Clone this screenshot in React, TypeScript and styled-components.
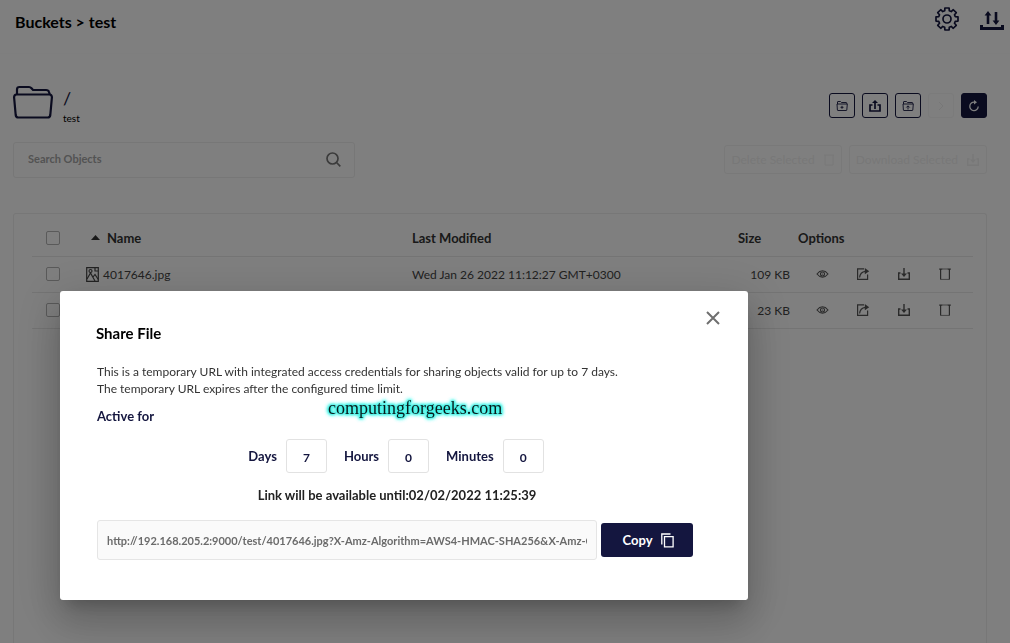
import React, { useState } from "react";
import styled, { createGlobalStyle, css } from "styled-components";

const navy = "#14163f";

const GlobalStyle = createGlobalStyle`
  *, *::before, *::after { box-sizing: border-box; }
  html, body { margin: 0; min-height: 100%; background: #ffffff; }
  body, button, input { font-family: Lato, "Liberation Sans", sans-serif; }
  body { overflow: hidden; }
`;

const Page = styled.div`
  display: flex;
  flex-direction: column;
  min-height: 100vh;
  color: #000000;
`;

const TopBar = styled.header`
  display: flex;
  align-items: flex-start;
  justify-content: space-between;
  height: 54px;
  padding: 7px 6px 0 15px;
  border-bottom: 1px solid #fcfcfc;
`;

const Crumbs = styled.h1`
  margin: 4px 0 0;
  font-size: 16px;
  line-height: 22px;
  font-weight: 700;
`;

const TopActions = styled.div`
  display: flex;
  gap: 21px;
  color: ${navy};
`;

const IconButton = styled.button<{ $pad?: number }>`
  display: flex;
  padding: ${(p) => p.$pad ?? 0}px;
  border: 0;
  background: none;
  color: inherit;
`;

const Main = styled.main`
  display: flex;
  flex-direction: column;
  flex: 1;
  padding: 31px 23px 0 13px;
`;

const TitleRow = styled.div`
  display: flex;
  justify-content: space-between;
  align-items: flex-start;
  height: 57px;
`;

const BucketTitle = styled.div`
  display: flex;
  gap: 10px;
  color: ${navy};
`;

const BucketText = styled.div`
  display: flex;
  flex-direction: column;
  padding-top: 3px;
`;

const Slash = styled.span`
  font-size: 18px;
  line-height: 20px;
`;

const BucketName = styled.span`
  font-size: 10px;
  line-height: 20px;
  color: #000000;
`;

const Actions = styled.div`
  display: flex;
  gap: 7px;
  padding-top: 8px;
`;

const SquareButton = styled.button<{ $tone?: "filled" | "faint" }>`
  display: flex;
  align-items: center;
  justify-content: center;
  width: 26px;
  height: 25px;
  padding: 0;
  border: 1px solid ${navy};
  border-radius: 3px;
  background: transparent;
  color: ${navy};
  ${(p) => p.$tone === "filled" && css`background: ${navy}; color: #ffffff;`}
  ${(p) => p.$tone === "faint" && css`border-color: #f6f6f6; color: #eeeeee;`}
`;

const FilterRow = styled.div`
  display: flex;
  justify-content: space-between;
  align-items: flex-start;
`;

const SearchBox = styled.label`
  display: flex;
  align-items: center;
  width: 342px;
  height: 36px;
  padding: 0 13px 2px 14px;
  border: 1px solid #eeeeee;
  border-radius: 3px;
  color: #777777;
`;

const SearchInput = styled.input`
  flex: 1;
  min-width: 0;
  padding: 0;
  border: 0;
  outline: 0;
  background: transparent;
  font-size: 11px;
  line-height: 16px;
  font-weight: 700;
  &::placeholder { color: #a6a6a6; opacity: 1; }
`;

const BulkActions = styled.div`
  display: flex;
  gap: 7px;
  padding-top: 3px;
`;

const GhostButton = styled.button`
  display: flex;
  align-items: center;
  gap: 8px;
  height: 29px;
  padding: 0 6px;
  border: 1px solid #f2f2f2;
  border-radius: 3px;
  background: transparent;
  color: #f0f0f0;
  font-size: 12px;
`;

const TablePanel = styled.section`
  flex: 1;
  margin-top: 35px;
  padding: 6px 13px 0 18px;
  border: 1px solid #eeeeee;
  border-bottom: 0;
  border-radius: 3px 3px 0 0;
`;

const Table = styled.table`
  width: 100%;
  table-layout: fixed;
  border-collapse: collapse;
`;

const Col = styled.col<{ $w?: number }>`
  ${(p) => p.$w && css`width: ${p.$w}px;`}
`;

const HeadCell = styled.th`
  height: 36px;
  padding: 0;
  border-bottom: 1px solid #e9e9e9;
  text-align: left;
  font-size: 13px;
  font-weight: 700;
  color: #333333;
`;

const Cell = styled.td<{ $right?: boolean }>`
  height: 36px;
  padding: 0;
  border-bottom: 1px solid #e9e9e9;
  font-size: 12px;
  color: #444444;
  ${(p) => p.$right && css`text-align: right; padding-right: 8px;`}
`;

const Inline = styled.div<{ $gap: number; $indent?: number }>`
  display: flex;
  align-items: center;
  gap: ${(p) => p.$gap}px;
  padding-left: ${(p) => p.$indent ?? 0}px;
`;

const Check = styled.input`
  display: block;
  appearance: none;
  width: 14px;
  height: 14px;
  margin: 0 0 0 14px;
  border: 1px solid #b4b4b4;
  border-radius: 2px;
`;

const RowActions = styled.div`
  display: flex;
  gap: 27px;
  padding-left: 18px;
  color: #555555;
`;

const Overlay = styled.div`
  position: fixed;
  inset: 0;
  padding: 291px 262px 0 60px;
  background: rgba(0, 0, 0, 0.5);
`;

const Dialog = styled.div`
  padding: 15px 23px 40px 36px;
  border-radius: 3px;
  background: #ffffff;
  color: #000000;
  box-shadow: 0 11px 15px -7px rgba(0, 0, 0, 0.2), 0 24px 38px 3px rgba(0, 0, 0, 0.14),
    0 9px 46px 8px rgba(0, 0, 0, 0.12);
`;

const DialogHead = styled.div`
  display: flex;
  justify-content: space-between;
  align-items: flex-start;
  height: 57px;
  color: #6f6f6f;
`;

const DialogTitle = styled.h2`
  margin: 17px 0 0;
  color: #000000;
  font-size: 15px;
  line-height: 20px;
  font-weight: 700;
`;

const DialogBody = styled.div`
  padding: 0 32px 0 1px;
`;

const Description = styled.p`
  margin: 0;
  font-size: 12px;
  line-height: 17px;
  color: #333333;
`;

const ActiveRow = styled.div`
  display: flex;
  gap: 174px;
  height: 42px;
`;

const ActiveFor = styled.div`
  padding-top: 10px;
  font-size: 13px;
  line-height: 18px;
  font-weight: 700;
  color: ${navy};
`;

const Watermark = styled.div`
  font-family: "Liberation Serif", serif;
  font-size: 18px;
  line-height: 22px;
  color: #0a1a1a;
  text-shadow: 0 0 2px #3ff2e6, 0 0 2px #3ff2e6, 0 0 3px #3ff2e6, 0 0 3px #3ff2e6, 0 0 4px #3ff2e6,
    0 0 4px #3ff2e6, 0 0 4px #3ff2e6, 0 0 4px #3ff2e6;
`;

const Durations = styled.div`
  display: flex;
  justify-content: center;
  gap: 17px;
  padding-left: 2px;
`;

const DurationLabel = styled.label`
  display: flex;
  align-items: center;
  gap: 9px;
  font-size: 13px;
  font-weight: 700;
  color: ${navy};
`;

const DurationInput = styled.input`
  width: 41px;
  height: 34px;
  padding: 2px 0 0;
  border: 1px solid #e2e2e2;
  border-radius: 3px;
  text-align: center;
  font-size: 12px;
  font-weight: 700;
  color: ${navy};
`;

const Until = styled.p`
  margin: 13px 0 16px;
  padding-left: 4px;
  text-align: center;
  font-size: 13px;
  line-height: 18px;
  font-weight: 700;
  color: #222222;
`;

const LinkRow = styled.div`
  display: flex;
  align-items: center;
  gap: 4px;
`;

const LinkInput = styled.input`
  flex: 1;
  min-width: 0;
  height: 40px;
  padding: 0 9px;
  border: 1px solid #e5e5e5;
  border-radius: 3px;
  background: #fafafa;
  font-size: 11px;
  font-weight: 700;
  color: #6b6b6b;
`;

const CopyButton = styled.button`
  display: flex;
  align-items: center;
  justify-content: center;
  gap: 8px;
  width: 92px;
  height: 34px;
  padding: 0 0 0 2px;
  border: 0;
  border-radius: 3px;
  background: ${navy};
  color: #ffffff;
  font-size: 13px;
  font-weight: 700;
`;

type IconProps = { w: number; h?: number; sw?: number; children: React.ReactNode };

const Icon = ({ w, h, sw = 1.2, children }: IconProps) => (
  <svg
    width={w}
    height={h ?? w}
    viewBox={`0 0 ${w} ${h ?? w}`}
    fill="none"
    stroke="currentColor"
    strokeWidth={sw}
    aria-hidden="true"
  >
    {children}
  </svg>
);

const gearPath = (() => {
  const points: string[] = [];
  const teeth = 8;
  for (let i = 0; i < teeth; i++) {
    const mid = (i * 2 * Math.PI) / teeth;
    [
      [-0.27, 8.6],
      [-0.19, 11.2],
      [0.19, 11.2],
      [0.27, 8.6],
    ].forEach(([a, r]) =>
      points.push(`${(12 + r * Math.sin(mid + a)).toFixed(2)} ${(12 - r * Math.cos(mid + a)).toFixed(2)}`)
    );
  }
  return `M${points.join("L")}Z`;
})();

const GearIcon = () => (
  <Icon w={24} sw={1.7}>
    <path d={gearPath} strokeLinejoin="round" />
    <circle cx="12" cy="12" r="4" />
  </Icon>
);

const TransferIcon = () => (
  <Icon w={24} sw={3}>
    <path d="M1.500 18v3.500h21V18" />
    <path d="M8 17V8M16 5v9" strokeWidth="2.600" />
    <path d="M8 4l3.400 4.600H4.600zM16 18l-3.400-4.600h6.800z" fill="currentColor" stroke="none" />
  </Icon>
);

const BucketIcon = () => (
  <Icon w={40} h={34} sw={2.2}>
    <path d="M4 9V4.500q0-2.500 2.500-2.500H16q1.500 0 2.500 1.200L20 5h13q2.500 0 3 2l.8 2.500" />
    <path d="M3.500 9.500h33q2.500.3 2.400 3L37.300 30q-.3 2.500-2.600 2.500H5.300Q3 32.500 2.700 30L1.100 12.500Q1 9.800 3.500 9.500z" />
  </Icon>
);

const NewFolderIcon = () => (
  <Icon w={12} h={10} sw={0.9}>
    <path d="M1.500 3V1q0-.5.500-.5h2.500l1 1H10q.8 0 .8.8V3M1 3h10.300L10.800 9q0 .5-.5.5H2q-.6 0-.6-.5zM6 4.800v3M4.500 6.300h3" />
  </Icon>
);

const UploadIcon = () => (
  <Icon w={12} h={12} sw={1.7}>
    <path d="M3.500 5H1v6h10V5H8.500M6 9V2" />
    <path d="M6 0l3 3H3z" fill="currentColor" stroke="none" />
  </Icon>
);

const UploadFolderIcon = () => (
  <Icon w={12} h={10} sw={0.9}>
    <path d="M1.500 3V1q0-.5.500-.5h2.500l1 1H10q.8 0 .8.8V3M1 3h10.300L10.800 9q0 .5-.5.5H2q-.6 0-.6-.5zM6 8.500V5M4.300 6.500l1.700-1.700 1.700 1.700" />
  </Icon>
);

const RewindIcon = () => (
  <Icon w={10} sw={1}>
    <path d="M3 1l4 4-4 4" />
  </Icon>
);

const RefreshIcon = () => (
  <Icon w={12} h={12} sw={1.3}>
    <path d="M6.500 2.200A4.200 4.200 0 1 0 10.200 6.500" />
    <path d="M6 0l3 2.300L6 4.600z" fill="currentColor" stroke="none" />
  </Icon>
);

const SearchIcon = () => (
  <Icon w={15} sw={1.7}>
    <circle cx="6.500" cy="6.500" r="5.500" />
    <path d="M10.500 10.500L14.300 14.300" />
  </Icon>
);

const TrashIcon = () => (
  <Icon w={12} h={13} sw={1}>
    <path d="M1 2h10M2 2v10h8V2" />
  </Icon>
);

const SortIcon = () => (
  <Icon w={9} h={5} sw={0}>
    <path d="M4.500 0L9 5H0z" fill="currentColor" />
  </Icon>
);

const ImageFileIcon = () => (
  <Icon w={13} h={15} sw={1.2}>
    <path d="M.7.7h11.600v13.600H.7zM9 .7v3.300h3.300" />
    <circle cx="4.500" cy="4" r="1.500" />
    <path d="M1 12l3.500-6 4.500 8M7 10l2-2.500 3.300 5" />
  </Icon>
);

const EyeIcon = () => (
  <Icon w={13} h={12} sw={1.1}>
    <path d="M1 6Q3.500 2.800 6.500 2.800T12 6Q9.500 9.200 6.500 9.200T1 6z" />
    <circle cx="6.500" cy="6" r="2" />
    <circle cx="6.500" cy="6" r=".6" fill="currentColor" stroke="none" />
  </Icon>
);

const ShareIcon = () => (
  <Icon w={14} h={12} sw={1.2}>
    <path d="M8 .9H1.600v10.500h10V6.500" />
    <path d="M3.600 9.500Q4 4 9.500 3.300" />
    <path d="M8.800 0L13.200 3.200 8.800 6.300z" fill="currentColor" stroke="none" />
  </Icon>
);

const DownloadIcon = () => (
  <Icon w={14} h={12} sw={1.4}>
    <path d="M3.500 5H1.700v6.300h10.600V5h-1.800M7 0v6" />
    <path d="M7 9L4 5.500h6z" fill="currentColor" stroke="none" />
  </Icon>
);

const DeleteIcon = () => (
  <Icon w={14} h={12} sw={1.2}>
    <path d="M2.600 1.500v10M11.400 1.500v10M1.200 1.200h3M9.800 1.200h3" />
    <path d="M4 1h6M2.600 11.400h8.800" strokeWidth=".7" />
  </Icon>
);

const CloseIcon = () => (
  <Icon w={14} sw={2}>
    <path d="M1 1l12 12M13 1L1 13" />
  </Icon>
);

const CopyIcon = () => (
  <Icon w={13} h={15} sw={1.3}>
    <path d="M.8 11.500V1h8.700" />
    <path d="M3.500 3.600h8.600v10.200H3.500z" />
  </Icon>
);

const rows = [
  { name: "4017646.jpg", modified: "Wed Jan 26 2022 11:12:27 GMT+0300", size: "109 KB" },
  { name: "4017647.jpg", modified: "Wed Jan 26 2022 11:12:27 GMT+0300", size: "23 KB" },
];

const Duration = ({ label, initial }: { label: string; initial: string }) => {
  const [value, setValue] = useState(initial);
  return (
    <DurationLabel>
      {label}
      <DurationInput inputMode="numeric" value={value} onChange={(e) => setValue(e.target.value)} />
    </DurationLabel>
  );
};

export default function App() {
  return (
    <>
      <GlobalStyle />
      <Page>
        <TopBar>
          <Crumbs>Buckets &gt; test</Crumbs>
          <TopActions>
            <IconButton aria-label="Settings"><GearIcon /></IconButton>
            <IconButton aria-label="Transfers"><TransferIcon /></IconButton>
          </TopActions>
        </TopBar>
        <Main>
          <TitleRow>
            <BucketTitle>
              <BucketIcon />
              <BucketText>
                <Slash>/</Slash>
                <BucketName>test</BucketName>
              </BucketText>
            </BucketTitle>
            <Actions>
              <SquareButton aria-label="New folder"><NewFolderIcon /></SquareButton>
              <SquareButton aria-label="Upload file"><UploadIcon /></SquareButton>
              <SquareButton aria-label="Upload folder"><UploadFolderIcon /></SquareButton>
              <SquareButton $tone="faint" disabled aria-label="Rewind"><RewindIcon /></SquareButton>
              <SquareButton $tone="filled" aria-label="Refresh"><RefreshIcon /></SquareButton>
            </Actions>
          </TitleRow>
          <FilterRow>
            <SearchBox>
              <SearchInput type="text" placeholder="Search Objects" aria-label="Search Objects" />
              <SearchIcon />
            </SearchBox>
            <BulkActions>
              <GhostButton disabled>Delete Selected<TrashIcon /></GhostButton>
              <GhostButton disabled>Download Selected<DownloadIcon /></GhostButton>
            </BulkActions>
          </FilterRow>
          <TablePanel>
            <Table>
              <colgroup>
                <Col $w={54} />
                <Col />
                <Col />
                <Col $w={60} />
                <Col $w={175} />
              </colgroup>
              <thead>
                <tr>
                  <HeadCell><Check type="checkbox" aria-label="Select all" /></HeadCell>
                  <HeadCell><Inline $gap={7} $indent={5}><SortIcon />Name</Inline></HeadCell>
                  <HeadCell>Last Modified</HeadCell>
                  <HeadCell>Size</HeadCell>
                  <HeadCell>Options</HeadCell>
                </tr>
              </thead>
              <tbody>
                {rows.map((row) => (
                  <tr key={row.name}>
                    <Cell><Check type="checkbox" aria-label={`Select ${row.name}`} /></Cell>
                    <Cell><Inline $gap={4}><ImageFileIcon />{row.name}</Inline></Cell>
                    <Cell>{row.modified}</Cell>
                    <Cell $right>{row.size}</Cell>
                    <Cell>
                      <RowActions>
                        <IconButton aria-label="Preview"><EyeIcon /></IconButton>
                        <IconButton aria-label="Share"><ShareIcon /></IconButton>
                        <IconButton aria-label="Download"><DownloadIcon /></IconButton>
                        <IconButton aria-label="Delete"><DeleteIcon /></IconButton>
                      </RowActions>
                    </Cell>
                  </tr>
                ))}
              </tbody>
            </Table>
          </TablePanel>
        </Main>
      </Page>
      <Overlay>
        <Dialog role="dialog" aria-modal="true" aria-labelledby="share-title">
          <DialogHead>
            <DialogTitle id="share-title">Share File</DialogTitle>
            <IconButton aria-label="Close" $pad={5}><CloseIcon /></IconButton>
          </DialogHead>
          <DialogBody>
            <Description>
              This is a temporary URL with integrated access credentials for sharing objects valid for up to 7 days.
              <br />
              The temporary URL expires after the configured time limit.
            </Description>
            <ActiveRow>
              <ActiveFor>Active for</ActiveFor>
              <Watermark>computingforgeeks.com</Watermark>
            </ActiveRow>
            <Durations>
              <Duration label="Days" initial="7" />
              <Duration label="Hours" initial="0" />
              <Duration label="Minutes" initial="0" />
            </Durations>
            <Until>Link will be available until:02/02/2022 11:25:39</Until>
            <LinkRow>
              <LinkInput
                readOnly
                aria-label="Share link"
                value="http://192.168.205.2:9000/test/4017646.jpg?X-Amz-Algorithm=AWS4-HMAC-SHA256&X-Amz-Credential=minioadmin"
              />
              <CopyButton>Copy<CopyIcon /></CopyButton>
            </LinkRow>
          </DialogBody>
        </Dialog>
      </Overlay>
    </>
  );
}
